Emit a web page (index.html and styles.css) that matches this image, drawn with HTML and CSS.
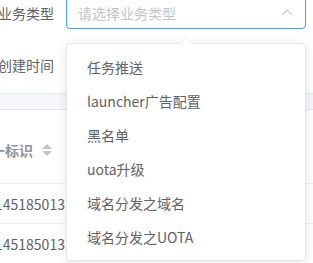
FILE: index.html
```html
<!DOCTYPE html>
<html lang="zh">
<head>
<meta charset="utf-8">
<link rel="stylesheet" href="styles.css">
</head>
<body>
<div class="page">
  <div class="form">
    <div class="form-item first">
      <label class="form-label">业务类型</label>
      <div class="select">
        <div class="input is-focus">
          <span class="placeholder">请选择业务类型</span>
          <svg class="arrow" width="12" height="8" viewBox="0 0 12 8"><polyline points="1.5,6.5 6,2 10.5,6.5" fill="none" stroke="#c0c4cc" stroke-width="1.1"/></svg>
        </div>
      </div>
    </div>
    <div class="form-item second">
      <label class="form-label">创建时间</label>
      <div class="field"></div>
    </div>
  </div>

  <div class="band"></div>

  <div class="table">
    <div class="thead">
      <div class="th">唯一标识<span class="caret"><i class="up"></i><i class="down"></i></span></div>
    </div>
    <div class="tr"><div class="td">145185013</div></div>
    <div class="tr"><div class="td">145185013</div></div>
  </div>

  <div class="dropdown">
    <span class="popper-arrow"></span>
    <ul class="options">
      <li>任务推送</li>
      <li>launcher广告配置</li>
      <li>黑名单</li>
      <li>uota升级</li>
      <li>域名分发之域名</li>
      <li>域名分发之UOTA</li>
    </ul>
  </div>
</div>
</body>
</html>
```

FILE: styles.css
```css
* { box-sizing: border-box; }
html, body { margin: 0; padding: 0; }
body {
  width: 313px;
  height: 263px;
  overflow: hidden;
  background: #fff;
  font-family: "Noto Sans CJK SC", "Noto Sans", sans-serif;
  font-size: 14px;
  color: #606266;
}
.page {
  position: relative;
  width: 313px;
  height: 263px;
  overflow: hidden;
}
.form {
  margin-left: -34px;
  margin-top: -3px;
}
.form-item {
  display: flex;
  align-items: center;
  height: 32px;
}
.form-item.second { margin-top: 20px; }
.form-label {
  width: 100px;
  padding-right: 12px;
  text-align: right;
  line-height: 32px;
  color: #606266;
}
.select { width: 240px; }
.input {
  height: 32px;
  border: 1px solid #dcdfe6;
  border-radius: 4px;
  padding: 0 11px;
  display: flex;
  align-items: center;
  justify-content: space-between;
}
.input.is-focus { border-color: #409eff; }
.placeholder { color: #c0c4cc; line-height: 30px; }
.arrow { margin-right: 1px; margin-top: -2px; }
.field { width: 240px; height: 32px; }

.band {
  margin-top: 12px;
  height: 17px;
  background: #f5f7fa;
  border-top: 1px solid #e4e7ed;
  border-bottom: 1px solid #e4e7ed;
}
.table { margin-left: -23px; }
.thead {
  height: 74px;
  padding-top: 30px;
  border-bottom: 1px solid #ebeef5;
}
.th {
  height: 20px;
  display: flex;
  align-items: center;
  font-weight: bold;
  color: #909399;
}
.caret {
  display: inline-flex;
  flex-direction: column;
  align-items: center;
  width: 24px;
  margin-left: 2px;
}
.caret i {
  display: block;
  width: 0;
  height: 0;
  border: 5px solid transparent;
}
.caret .up { border-bottom-color: #c0c4cc; border-top-width: 0; margin-bottom: 2px; }
.caret .down { border-top-color: #c0c4cc; border-bottom-width: 0; }
.tr {
  height: 40px;
  border-bottom: 1px solid #ebeef5;
  display: flex;
  align-items: center;
}
.td { margin-left: 18px; }

.dropdown {
  position: absolute;
  left: 66px;
  top: 43px;
  width: 240px;
  background: #fff;
  border: 1px solid #e4e7ed;
  border-radius: 4px;
  box-shadow: 0 2px 12px 0 rgba(0, 0, 0, 0.1);
}
.popper-arrow {
  position: absolute;
  top: -7px;
  left: 113px;
  width: 0;
  height: 0;
  border: 6px solid transparent;
  border-top-width: 0;
  border-bottom-color: #ebeef5;
}
.popper-arrow::after {
  content: "";
  position: absolute;
  left: -6px;
  top: 1px;
  border: 6px solid transparent;
  border-top-width: 0;
  border-bottom-color: #fff;
}
.options {
  list-style: none;
  margin: 0;
  padding: 6px 0;
}
.options li {
  height: 34px;
  line-height: 34px;
  padding: 0 20px;
  color: #606266;
  white-space: nowrap;
}
```
